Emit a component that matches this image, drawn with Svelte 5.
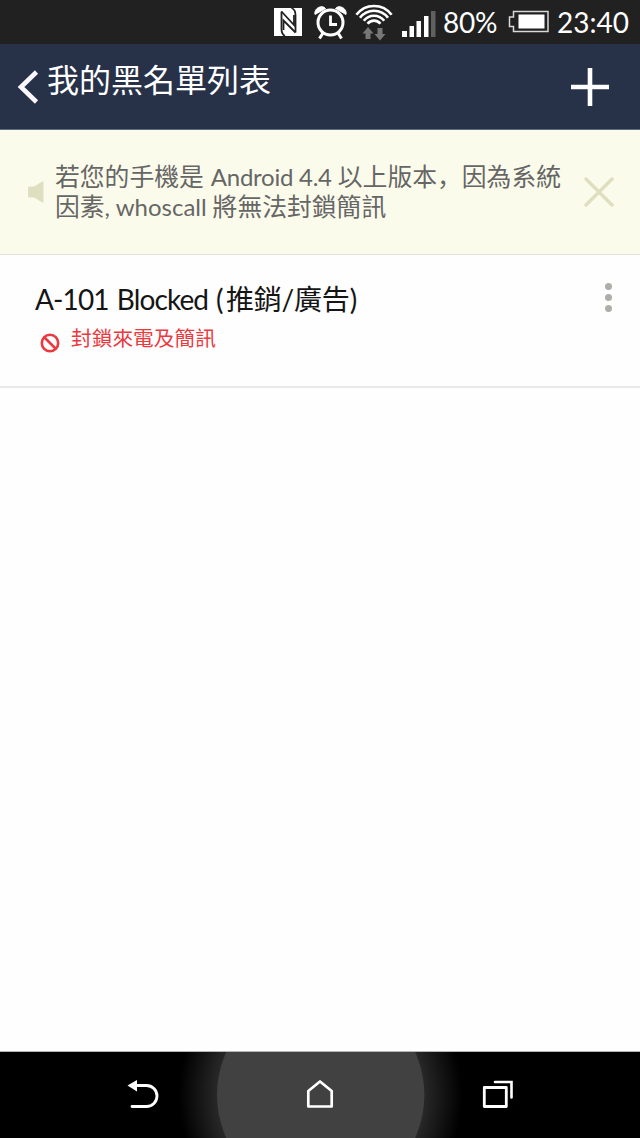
<script lang="ts">
  let noticeOpen = $state(true);

  const blocked = [
    { name: 'A-101 Blocked', open: '(', tag: '推銷/廣告', close: ')', rule: '封鎖來電及簡訊' }
  ];
</script>

<div class="screen">
  <div class="status">
    <svg class="status-icons" width="172" height="44" viewBox="0 0 172 44">
      <!-- nfc -->
      <path d="M9 8H37V36H9Z" fill="#fff" />
      <g fill="none" stroke="#212121" stroke-width="1.800">
        <path d="M20 36Q16.500 34 16.500 29V11.500" />
        <path d="M16.500 11.500L29 25V15" />
        <path d="M26.500 8Q30.500 9.500 30.500 15V32.500" />
        <path d="M30.500 32.500L18.500 20.500V30" />
      </g>
      <!-- alarm -->
      <g fill="none" stroke="#fff" stroke-width="3">
        <circle cx="65.500" cy="22.500" r="12.500" />
        <path d="M65.500 15.500V24.500H72" stroke-width="2.800" />
        <path d="M58 33L54.500 38.500M73 33L76.500 38.500" />
      </g>
      <path d="M50 14.500C48.500 8.500 57 4 60.500 8.500ZM81 14.500C82.500 8.500 74 4 70.500 8.500Z" fill="#fff" stroke="#fff" stroke-width="1" />
      <!-- wifi -->
      <g fill="none" stroke="#fff" stroke-width="2.700">
        <path d="M91.400 14.800A22 22 0 0 1 126.600 14.800" />
        <path d="M95 17.800A17.400 17.400 0 0 1 123 17.800" />
        <path d="M98.800 20.800A12.800 12.800 0 0 1 119.200 20.800" />
        <path d="M102.600 23.800A8 8 0 0 1 115.400 23.800" />
      </g>
      <path d="M103 27L108.500 33.500H105.500V39H100.500V33.500H97.500ZM115 40.500L109.500 34H112.500V28H117.500V34H120.500Z" fill="#777" />
      <!-- signal -->
      <path d="M137 31h5v6h-5zM144.500 26h4.500v11h-4.500zM151.500 21h4.500v16h-4.500zM159 16h4.500v21h-4.500z" fill="#fff" />
      <path d="M166 11h4.500v26h-4.500z" fill="#606060" />
    </svg>
    <span class="percent">80%</span>
    <svg class="battery" width="42" height="24" viewBox="0 0 42 24">
      <path d="M5.500 1.500H40V21.500H5.500V16.500H1.500V7H5.500Z" fill="none" stroke="#d8d8d8" stroke-width="1.500" />
      <rect x="10.500" y="4.500" width="26" height="14" fill="#fff" />
    </svg>
    <span class="clock">23:40</span>
  </div>

  <header class="bar">
    <button class="back" aria-label="返回">
      <svg width="22" height="34" viewBox="0 0 22 34">
        <path d="M19.500 2L4 17L19.500 32" fill="none" stroke="#faf7ff" stroke-width="4.600" />
      </svg>
    </button>
    <h1>我的黑名單列表</h1>
    <button class="add" aria-label="新增">
      <svg width="38" height="38" viewBox="0 0 38 38">
        <path d="M19 0V38M0 19H38" stroke="#fff" stroke-width="4.600" />
      </svg>
    </button>
  </header>

  {#if noticeOpen}
    <div class="notice">
      <svg class="speaker" width="16" height="22" viewBox="0 0 16 22">
        <path d="M1.500 5.500H6L14.500 0.500Q15.500 0 15.500 1.500V20.500Q15.500 22 14.500 21.500L6 16.500H1.500Q0 16.500 0 15V7Q0 5.500 1.500 5.500Z" fill="#dddfbe" />
      </svg>
      <p>
        若您的手機是<span class="latin os">Android 4.4</span>以上版本<span class="comma">，</span>因為系統<br />
        因素<span class="latin app">, whoscall</span>將無法封鎖簡訊
      </p>
      <button class="close" aria-label="關閉" onclick={() => (noticeOpen = false)}>
        <svg width="30" height="30" viewBox="0 0 30 30">
          <path d="M2 2L28 28M28 2L2 28" stroke="#dddfbe" stroke-width="3.400" stroke-linecap="round" />
        </svg>
      </button>
    </div>
  {/if}

  <ul class="list">
    {#each blocked as item}
      <li class="row">
        <div class="info">
          <div class="name"><span class="latin who">{item.name}</span><span class="paren">{item.open}</span>{item.tag}<span class="paren">{item.close}</span></div>
          <div class="rule">
            <svg width="20" height="20" viewBox="0 0 20 20">
              <circle cx="10" cy="10" r="8.200" fill="none" stroke="#ea3a3f" stroke-width="2.600" />
              <path d="M4.500 4.500L15.500 15.500" stroke="#ea3a3f" stroke-width="2.600" />
            </svg>
            <span>{item.rule}</span>
          </div>
        </div>
        <button class="more" aria-label="更多">
          <i></i><i></i><i></i>
        </button>
      </li>
    {/each}
  </ul>

  <nav class="keys">
    <svg width="640" height="86" viewBox="0 0 640 86">
      <defs>
        <radialGradient id="glow" gradientUnits="userSpaceOnUse" cx="320.500" cy="43" r="142">
          <stop offset="0.700" stop-color="#2c2c2c" />
          <stop offset="1" stop-color="#000" />
        </radialGradient>
      </defs>
      <rect width="640" height="86" fill="url(#glow)" />
      <circle cx="320.700" cy="43" r="103.700" fill="#414141" />
      <!-- back -->
      <path d="M135 33.500H146.500A10.500 10.500 0 0 1 146.500 54.500H132" fill="none" stroke="#fff" stroke-width="2.800" stroke-linecap="round" />
      <path d="M127.500 33.500L137 28V39.500Z" fill="#fff" />
      <!-- home -->
      <path d="M308.300 54.500V39L320 29.500L331.700 39V54.500Z" fill="none" stroke="#fff" stroke-width="2.700" stroke-linejoin="round" />
      <!-- recent apps -->
      <rect x="484.300" y="35.500" width="22" height="19" fill="none" stroke="#fff" stroke-width="2.800" stroke-linejoin="round" />
      <path d="M495 30H511.500V45.500" fill="none" stroke="#fff" stroke-width="2.600" stroke-linecap="round" />
    </svg>
  </nav>
</div>

<style>
  :global(body) {
    margin: 0;
    background: #fefefe;
  }

  .screen {
    display: flex;
    flex-direction: column;
    width: 640px;
    height: 1138px;
    overflow: hidden;
    background: #fefefe;
    font-family: Lato, 'Noto Sans CJK TC', sans-serif;
    font-weight: 400;
  }

  button {
    display: flex;
    padding: 0;
    border: 0;
    background: none;
  }

  svg {
    display: block;
    flex: none;
  }

  .status {
    display: flex;
    flex: none;
    align-items: center;
    height: 44px;
    padding-left: 265px;
    background: #212121;
    color: #fff;
    font-size: 28px;
    line-height: 44px;
    white-space: nowrap;
  }

  .percent {
    width: 64px;
    margin-left: 6px;
    letter-spacing: -0.2px;
  }

  .battery {
    margin-left: 1px;
  }

  .clock {
    margin-left: 7px;
  }

  .bar {
    display: flex;
    flex: none;
    align-items: flex-start;
    box-sizing: border-box;
    height: 86px;
    border-bottom: 1px solid #5d6b84;
    background: #273148;
    color: #fff;
  }

  .back {
    margin: 26px 0 0 17px;
  }

  h1 {
    flex: 1;
    margin: 12px 0 0 8px;
    font-size: 32px;
    font-weight: 400;
    line-height: 48px;
  }

  .add {
    margin: 24px 31px 0 0;
  }

  .notice {
    display: flex;
    flex: none;
    align-items: flex-start;
    box-sizing: border-box;
    height: 125px;
    padding-left: 28px;
    border-bottom: 1px solid #e2e3dc;
    background: #fbfbeb;
    color: #666;
  }

  .speaker {
    margin-top: 51px;
  }

  p {
    flex: 1;
    margin: 32px 0 0 11px;
    font-family: Roboto, 'Noto Sans CJK TC', sans-serif;
    font-size: 24.8px;
    line-height: 29px;
    white-space: nowrap;
  }

  .comma {
    font-family: Roboto, 'Noto Sans CJK SC', sans-serif;
  }

  .latin {
    display: inline-block;
    font-family: Lato, sans-serif;
    white-space: pre;
  }

  .os {
    box-sizing: border-box;
    width: 134px;
    padding-left: 7px;
    font-size: 24px;
    letter-spacing: -0.25px;
  }

  .app {
    width: 108px;
    font-size: 24px;
  }

  .close {
    margin: 47px 26px 0 0;
  }

  .list {
    flex: 1;
    margin: 0;
    padding: 0;
    list-style: none;
  }

  .row {
    display: flex;
    justify-content: space-between;
    box-sizing: border-box;
    height: 133px;
    padding-left: 35px;
    border-bottom: 2px solid #e9e9e9;
  }

  .name {
    margin-top: 24px;
    color: #151515;
    font-size: 28px;
    line-height: 40px;
    letter-spacing: -0.2px;
    white-space: nowrap;
  }

  .who {
    width: 181px;
    letter-spacing: -0.9px;
    word-spacing: 2px;
  }

  .paren {
    display: inline-block;
    width: 10px;
  }

  .rule {
    display: flex;
    align-items: center;
    margin: 4px 0 0 5px;
    color: #ea3a3f;
    font-size: 20.7px;
    line-height: 30px;
  }

  .rule svg {
    margin: 10px 11px 0 0;
  }

  .more {
    flex-direction: column;
    gap: 4px;
    margin: 28px 28px 0 0;
  }

  .more i {
    width: 7px;
    height: 7px;
    border-radius: 50%;
    background: #aeaea8;
  }

  .keys {
    flex: none;
    height: 86px;
    border-top: 1px solid #b5b5b5;
    background: #000;
  }
</style>
